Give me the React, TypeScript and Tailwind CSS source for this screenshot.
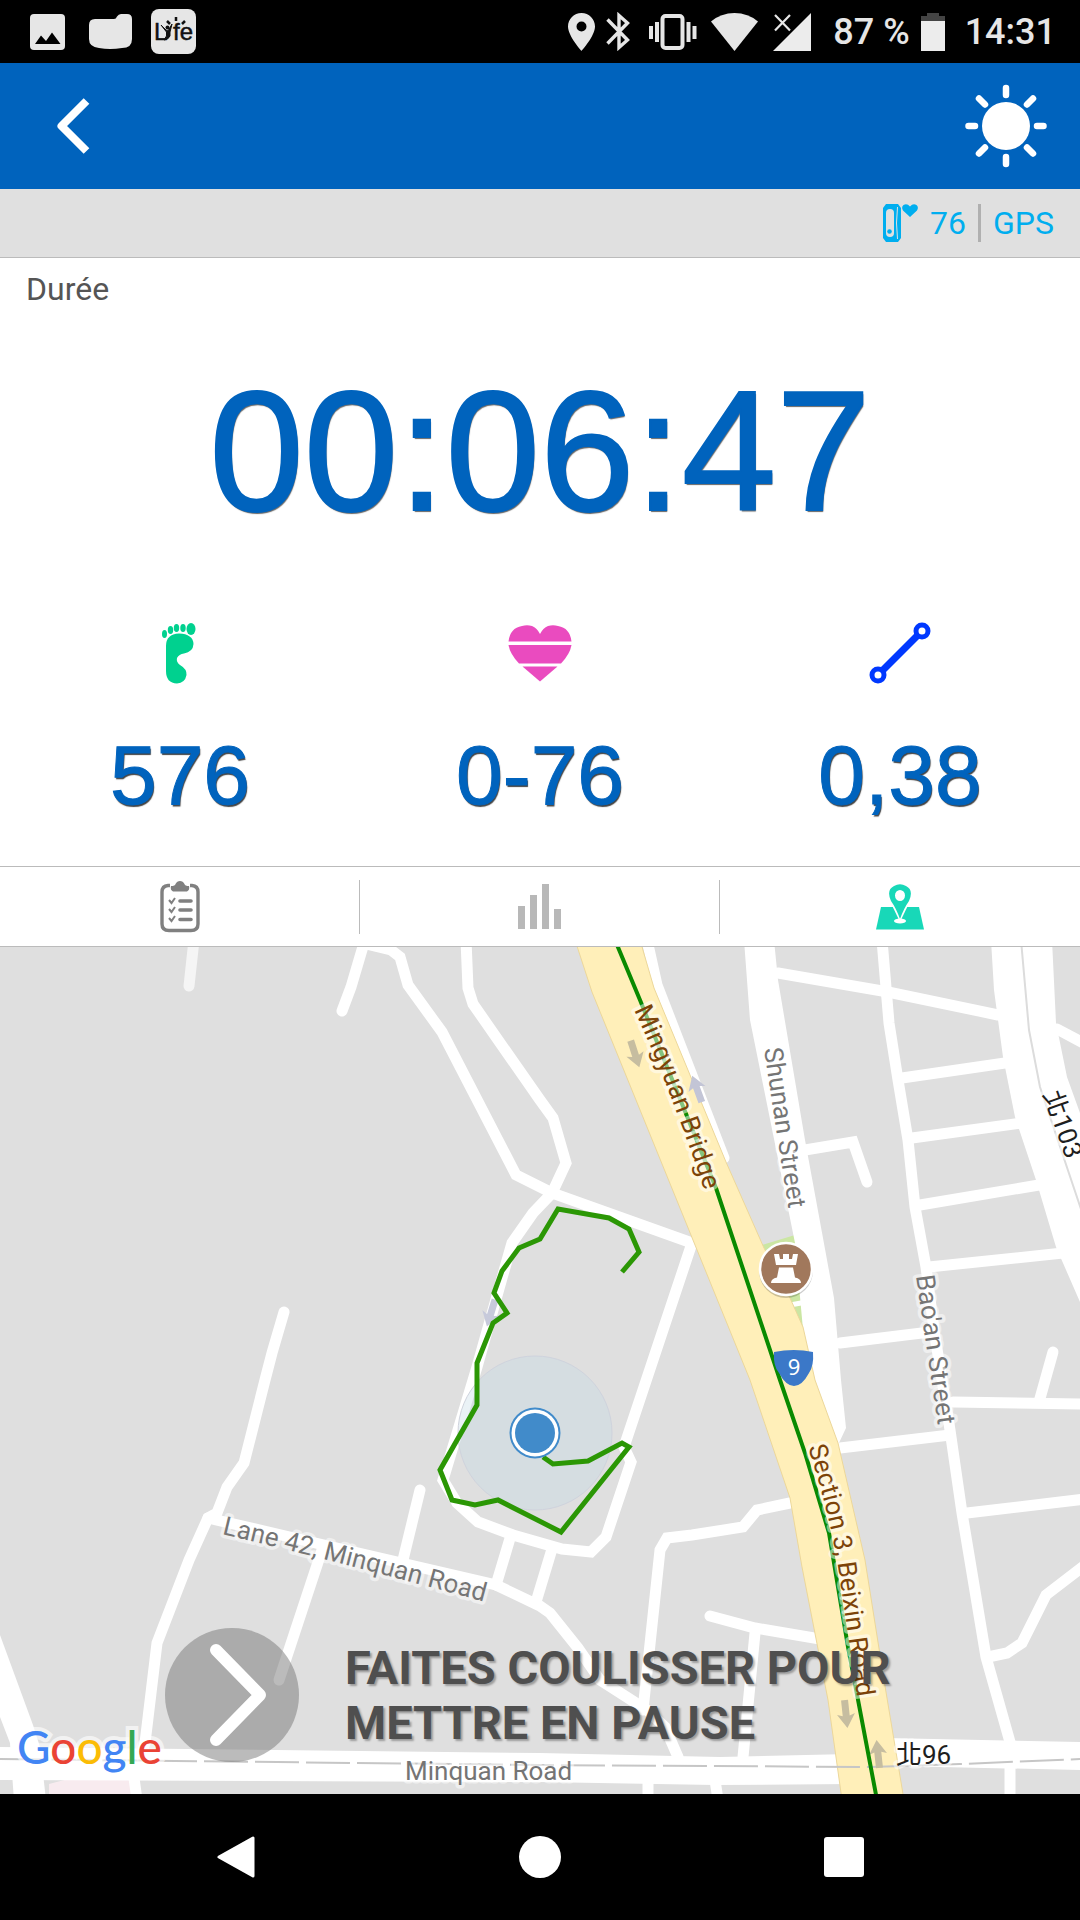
import type { ReactNode } from "react";

const roads = [
  "M364 943L351 987L342 1011",
  "M362 943L391 950L400 957L408 985L442 1032L516 1175L552 1193L692 1243",
  "M466 940L468 988L473 1004L540 1100L553 1118L566 1163L552 1193L533 1213L512 1243L502 1278L477 1367L443 1480L457 1503L478 1522L513 1535L562 1549L591 1552L606 1537L631 1462L624 1447L692 1243",
  "M511 1535L496 1585",
  "M552 1549L536 1602",
  "M284 1312L272 1353L265 1380L244 1463L227 1487L217 1513L208 1518L189 1560L157 1643L145 1743L134 1778L137 1800",
  "M208 1518L324 1545L496 1585L540 1606L550 1613L578 1648L600 1680L647 1710L665 1727L678 1757",
  "M420 1490L403 1560",
  "M322 1550L279 1680",
  "M790 1503L757 1510L743 1527L692 1535L667 1538L660 1550L643 1710",
  "M710 1616L755 1628L820 1639",
  "M755 1633L743 1757",
  "M648 1780V1800",
  "M715 1780L718 1800",
  "M778 973L888 992L998 1015",
  "M1057 1029L1085 1044",
  "M882 940L889 1023L898 1080L908 1140L915 1207L926 1267L934 1330L950 1430L962 1513L986 1657L1010 1742V1800",
  "M902 1078L1005 1063",
  "M912 1138L1022 1123",
  "M920 1205L1039 1185",
  "M929 1267L1063 1253",
  "M840 1343L930 1332",
  "M840 1448L950 1435",
  "M953 1402L1085 1404",
  "M1039 1402L1053 1352",
  "M967 1513L1085 1499",
  "M1085 1565L1046 1595L1022 1643L1007 1653L988 1657",
  "M805 1150L853 1142L867 1182",
];

const arrows = [
  { at: "translate(635 1054) rotate(-18)", color: "#c6bda0" },
  { at: "translate(697 1089) rotate(160)", color: "#c3c5d6" },
  { at: "translate(491 1313) rotate(17)", color: "#c7cadb" },
  { at: "translate(846 1714) rotate(-6)", color: "#c6bda0" },
  { at: "translate(878 1754) rotate(174)", color: "#c6bda0" },
];

const StatusBar = () => (
  <div className="flex h-[63px] items-center justify-between bg-black pl-[30px] pr-6 text-[#e6e6e6]">
    <div className="flex items-center">
      <svg width="35" height="36" viewBox="0 0 35 36" aria-hidden="true">
        <rect width="35" height="36" rx="4" fill="#e6e6e6" />
        <path d="M5 30L11 21.500L16 27L22 18.500L30.500 30z" fill="#000" />
      </svg>
      <svg className="ml-6" width="43" height="35" viewBox="0 0 43 35" aria-hidden="true">
        <path
          d="M6 5H25Q27 5 28 2.500Q29.500 0 32 0H38Q43 0 43 5V25Q43 34 33 34Q21 36 10 34Q0 33 0 25V11Q0 5 6 5z"
          fill="#e6e6e6"
        />
      </svg>
      <svg className="ml-[19px]" width="45" height="45" viewBox="0 0 45 45" role="img" aria-label="Lyfe">
        <rect width="45" height="45" rx="8" fill="#e6e6e6" />
        <g fontSize="24" fill="#111" stroke="#111" strokeWidth=".5" fontFamily="Liberation Sans, sans-serif">
          <text x="3" y="31">L</text>
          <text x="22" y="31">fe</text>
        </g>
        <path d="M10 16L15 21L17 22L21 15L19 23V27Q17 31 13 31L15.500 27V23z" fill="#111" stroke="#111" />
        <circle cx="16.500" cy="18.500" r="2" fill="#111" />
        <path d="M16 12L19 15M25 8V12M34 12L31 15" stroke="#111" strokeWidth="2.500" />
      </svg>
    </div>

    <div className="flex items-center">
      <svg width="27" height="38" viewBox="0 0 27 38" aria-hidden="true">
        <path
          d="M13.500 0C6 0 0 6 0 13.500C0 23 13.500 38 13.500 38S27 23 27 13.500C27 6 21 0 13.500 0zM13.500 18.500a5 5 0 1 1 0-10a5 5 0 0 1 0 10z"
          fill="#e6e6e6"
        />
      </svg>
      <svg className="ml-[11px]" width="25" height="39" viewBox="0 0 25 39" fill="none" stroke="#e6e6e6" strokeWidth="3.400" aria-hidden="true">
        <path d="M1.500 7.500L21.500 28L13 35.500V3.500L21.500 11L1.500 31.500" />
      </svg>
      <svg className="ml-[18px]" width="48" height="36" viewBox="0 0 48 36" fill="#e6e6e6" aria-hidden="true">
        <rect x="13.500" y="2" width="20" height="32" rx="3" fill="none" stroke="#e6e6e6" strokeWidth="4" />
        <path d="M0 12h4v13H0zM6 8h4v20H6zM37.500 8h4v20h-4zM43.500 12h4v13h-4z" />
      </svg>
      <svg className="ml-[14px]" width="47" height="38" viewBox="0 0 47 38" aria-hidden="true">
        <path d="M0 8.500Q10 0 23.500 0T47 8.500L23.500 38z" fill="#e6e6e6" />
      </svg>
      <svg className="ml-[15px]" width="38" height="38" viewBox="0 0 38 38" aria-hidden="true">
        <path d="M0 38L38 0V38z" fill="#ececec" />
        <path d="M2 2L17 17.500M17 2L2 17.500" stroke="#e6e6e6" strokeWidth="2.200" />
      </svg>
      <span className="ml-[22px] text-[36px] font-medium leading-[42px]">87 %</span>
      <svg className="ml-[11px]" width="24" height="38" viewBox="0 0 24 38" aria-hidden="true">
        <path d="M6 0h12v3h6v5H0V3h6z" fill="#444" />
        <path d="M0 8h24v30H0z" fill="#ececec" />
      </svg>
      <span className="ml-5 text-[36px] font-medium leading-[42px]">14:31</span>
    </div>
  </div>
);

const Header = () => (
  <header className="flex h-[126px] items-center justify-between bg-[#0063bd] pl-[53px] pr-[33px]">
    <button type="button" aria-label="Retour" className="cursor-pointer">
      <svg width="40" height="60" viewBox="0 0 40 60" fill="none">
        <path d="M33.500 5L8.500 30L33.500 55" stroke="#fff" strokeWidth="8" strokeLinejoin="round" />
      </svg>
    </button>
    <button type="button" aria-label="Luminosité" className="cursor-pointer">
      <svg width="82" height="84" viewBox="-41 -42 82 84" fill="#fff" stroke="#fff">
        <circle r="24" stroke="none" />
        <path
          d="M0-38V-31M0 38V31M-37.500 0H-31M37.500 0H31M-27-27.500L-21-21.500M27-27.500L21-21.500M-27 27.500L-21 21.500M27 27.500L21 21.500"
          strokeWidth="6.500"
          strokeLinecap="round"
        />
      </svg>
    </button>
  </header>
);

const SensorBar = () => (
  <div className="flex h-[69px] items-center justify-end border-b border-[#bbbbbb] bg-[#e0e0e0] pr-[26px] text-[32px] leading-[40px] text-[#00aeef]">
    <svg width="35" height="38" viewBox="0 0 35 38" aria-hidden="true">
      <path d="M3 0H15L18 4V34L15 38H3L0 34V4z" fill="#00aeef" />
      <rect x="3" y="5" width="8" height="28" rx="4" fill="#e0e0e0" />
      <circle cx="6.500" cy="27.500" r="2.300" fill="#00aeef" />
      <path d="M14.500 3Q12.500 19 14.500 35" stroke="#e0e0e0" fill="none" />
      <path d="M27 13L20 6.500Q18 3 20.500 1Q24-1 27 2.500Q30-1 33.500 1Q36 3 34 6.500z" fill="#00aeef" />
    </svg>
    <span className="ml-3">76</span>
    <span className="mx-3 h-[38px] w-[3px] bg-[#b0b0b0]" />
    <span>GPS</span>
  </div>
);

const FootIcon = () => (
  <svg width="64" height="62" viewBox="0 0 64 62" fill="#00d18f">
    <ellipse cx="16.500" cy="12" rx="2.500" ry="4" />
    <ellipse cx="22.500" cy="8" rx="2.700" ry="4" />
    <ellipse cx="28.500" cy="6" rx="2.700" ry="4" />
    <ellipse cx="35" cy="6" rx="2.700" ry="4" />
    <ellipse cx="43" cy="7" rx="4.500" ry="6" />
    <path d="M18 24Q18 12 31 11.500Q45 12 45.500 22Q45 30 36 31.500Q31 32 29 36Q28 40 32 43Q39 47 38.500 53Q37 61 29 61.500Q18 61 18 49z" />
  </svg>
);

const HeartIcon = () => (
  <svg width="64" height="62" viewBox="0 0 64 62" fill="#ea4bbf">
    <path d="M.500 19.500Q2 6 14 4Q19 2.500 24 4Q29 6 32 12Q35 6 40 4Q45 2.500 50 4Q62 6 63.500 19.500z" />
    <path d="M.500 23H63.500Q62 32 53 41.500H11Q2 32 .500 23z" />
    <path d="M14.500 44.500H49.500L32 59.500z" />
  </svg>
);

const DistanceIcon = () => (
  <svg width="64" height="62" viewBox="0 0 64 62" fill="none" stroke="#0038ff">
    <path d="M15 48L49 14" strokeWidth="7" />
    <circle cx="54" cy="9" r="6" strokeWidth="5" />
    <circle cx="10" cy="53" r="6" strokeWidth="5" />
  </svg>
);

const Stat = ({ icon, value }: { icon: ReactNode; value: string }) => (
  <div className="flex flex-col items-center gap-[49px]">
    {icon}
    <span className="font-['Liberation_Sans',sans-serif] text-[84px] leading-[84px] text-[#0063bd] [-webkit-text-stroke:1px_#0063bd] [text-shadow:1px_2px_1px_#444]">
      {value}
    </span>
  </div>
);

const Tabs = () => (
  <nav className="grid h-[81px] grid-cols-3 items-center border-y border-[#bbbbbb] bg-white">
    <button type="button" aria-label="Liste" className="flex h-[54px] cursor-pointer items-center justify-center border-r border-[#bbbbbb]">
      <svg width="40" height="52" viewBox="0 0 40 52" fill="none" stroke="#808080">
        <path d="M10 4.500H8Q2 5 2 11V43Q2 49.500 9 49.500H31Q38 49.500 38 43V11Q38 5 32 4.500H30" strokeWidth="3.400" />
        <path d="M11 5Q15 5 15.500 3Q17 0 20 0Q23 0 24.500 3Q25 5 29 5Q30 9 27 10.500H13Q10 9 11 5z" fill="#808080" stroke="none" />
        <path d="M9 19L11.500 22L15 17M9 28L11.500 31L15 26M9 37L11.500 40L15 35" strokeWidth="2" />
        <path d="M20 20H31M20 29H31M20 38.500H31" strokeWidth="3.600" strokeLinecap="round" />
      </svg>
    </button>
    <button type="button" aria-label="Graphique" className="flex h-[54px] cursor-pointer items-center justify-center border-r border-[#bbbbbb]">
      <svg width="44" height="46" viewBox="0 0 44 46" fill="#b8b8b8">
        <path d="M0 22h7v23H0zM12 11h7v34h-7zM24 0h7v45h-7zM36 25h7v20h-7z" />
      </svg>
    </button>
    <button type="button" aria-label="Carte" aria-current="page" className="flex h-[54px] cursor-pointer items-center justify-center">
      <svg width="48" height="46" viewBox="0 0 48 46">
        <path d="M5 23H43L48 45.500H0z" fill="#18d8b8" />
        <path d="M24 38L12 13Q13-1 24-1T36 13z" fill="#fff" />
        <path
          d="M24 35Q20 24 15 17Q10 6 18 2Q24-1.500 30 2Q38 6 33 17Q28 24 24 35zM24 6a5 5.500 0 1 0 0 11a5 5.500 0 0 0 0-11z"
          fill="#18d8b8"
          fillRule="evenodd"
        />
        <ellipse cx="24" cy="37" rx="6" ry="2.500" fill="#fff" />
      </svg>
    </button>
  </nav>
);

const StreetMap = () => (
  <svg
    className="absolute inset-0 h-full w-full"
    viewBox="0 947 1080 847"
    preserveAspectRatio="xMidYMid slice"
    role="img"
    aria-label="Carte du parcours"
    fontFamily="Roboto, sans-serif"
  >
    <rect y="947" width="1080" height="847" fill="#dfdfdf" />
    <path d="M194 940L189 986" stroke="#f5f5f5" strokeWidth="11" strokeLinecap="round" />

    {/* parks and blocks */}
    <path d="M762 1245L795 1235L815 1400H800z" fill="#cbe6a3" />
    <path d="M49 1784L68 1779H130L132 1800H49z" fill="#f8ebef" />

    {/* minor streets */}
    <g fill="none" stroke="#fff" strokeWidth="11" strokeLinecap="round" strokeLinejoin="miter">
      {roads.map((d) => (
        <path key={d} d={d} />
      ))}
      <path d="M647 940L657 985L724 1158" />
      <path d="M790 1305L812 1301" strokeWidth="5" />
    </g>

    {/* wide streets */}
    <g fill="#fff">
      <path d="M0 1635L33 1725L40 1747L46 1800H14L11 1760L10 1743L0 1717z" />
      <path d="M0 1747L540 1753L720 1757L850 1754V1784L715 1785L540 1782L0 1780z" />
      <path d="M885 1738L1080 1742V1770L895 1766z" />
      <path d="M744 940L750 1020L795 1243L804 1340L809 1390L838 1445L846 1428L841 1380L834 1298L805 1140L778 980L774 940z" />
      <path d="M991 940L994 990L1003 1057L1015 1117L1036 1180L1056 1247L1080 1302V1113L1067 1077L1056 1023L1052 940z" />
    </g>
    <path d="M1021 940L1029 1030L1040 1087L1083 1215" stroke="#dcdcdc" strokeWidth="2" fill="none" />

    {/* main avenue */}
    <path
      d="M575 940L592 992L750 1380L790 1498L802 1567L828 1700L842 1800H904L884 1680L865 1560L838 1443L815 1380L803 1327L790 1298L764 1248L726 1162L654 988L640 940z"
      fill="#ffefb9"
      stroke="#ecd79a"
    />
    <path d="M0 1759L540 1765L870 1767L960 1764L1080 1759" fill="none" stroke="#c6c6c6" strokeWidth="2" strokeDasharray="44 7" />

    {arrows.map(({ at, color }) => (
      <path key={at} transform={at} d="M-3.500-14H3.500V2L9 0L0 14L-9 0L-3.500 2z" fill={color} />
    ))}

    <path
      d="M615 940L640 1000L716 1188L780 1380L805 1453L829 1533L848 1647L877 1800"
      fill="none"
      stroke="#0a8a00"
      strokeWidth="4"
    />

    {/* street names */}
    <defs>
      <path id="mingyuan" d="M634 1010Q668 1082 706 1195" />
      <path id="shunan" d="M764 1049Q776 1130 792 1230" />
      <path id="baoan" d="M916 1276L940 1440" />
      <path id="section3" d="M808 1447Q830 1515 838 1567L862 1730" />
      <path id="lane42" d="M222 1534Q340 1562 500 1606" />
      <path id="route103" d="M1043 1094L1075 1185" />
    </defs>
    <g fontSize="26" stroke="#fff" strokeOpacity=".5" strokeWidth="7" strokeLinejoin="round" paintOrder="stroke">
      <text fill="#7c4308"><textPath href="#mingyuan">Mingyuan Bridge</textPath></text>
      <text fill="#7c4308"><textPath href="#section3">Section 3, Beixin Road</textPath></text>
      <text fill="#757575"><textPath href="#shunan">Shunan Street</textPath></text>
      <text fill="#757575"><textPath href="#baoan">Bao'an Street</textPath></text>
      <text fill="#757575"><textPath href="#lane42">Lane 42, Minquan Road</textPath></text>
      <text x="405" y="1780" fill="#757575">Minquan Road</text>
      <g fill="#1e1e1e" fontFamily="Roboto, 'Noto Sans CJK TC', sans-serif">
        <text><textPath href="#route103">北103</textPath></text>
        <text x="896" y="1764">北96</text>
      </g>
    </g>

    {/* points of interest */}
    <circle cx="786" cy="1271" r="27" fill="#000" opacity=".2" />
    <circle cx="786" cy="1269" r="26" fill="#a1785c" stroke="#fff" strokeWidth="2.500" />
    <path
      d="M774 1254h5l1 5h3v-5h6v5h3l1-5h5l-2 11h-20zM779 1267.500h14l2 10q6 1 6 5.500h-30q0-4.500 6-5.500z"
      fill="#fff"
    />
    <path d="M774 1352Q794 1348 813 1352Q814 1366 809 1373Q802 1386 794 1386T779 1373Q773 1366 774 1352z" fill="#3b78c8" />
    <text x="794" y="1375" textAnchor="middle" fontSize="22" fill="#fff" fontFamily="Noto Sans, sans-serif">
      9
    </text>

    {/* position and recorded track */}
    <circle cx="535" cy="1433" r="77" fill="#c4dbe6" fillOpacity=".35" stroke="#cfd3dd" />
    <path
      d="M622 1272L639 1252L629 1229L609 1218L558 1209L540 1239L519 1248L502 1271L494 1293L507 1313L493 1323L477 1363V1405L440 1470L452 1500L475 1505L498 1500L561 1532L629 1447L622 1443L588 1461L553 1464L543 1457"
      fill="none"
      stroke="#2b9705"
      strokeWidth="5"
    />
    <circle cx="535" cy="1433" r="25.500" fill="#418bca" />
    <circle cx="535" cy="1433" r="23.500" fill="#fff" />
    <circle cx="535" cy="1433" r="20" fill="#418bca" />

    <text
      x="17"
      y="1764"
      fontSize="46"
      fontWeight="500"
      fontFamily="Lato, sans-serif"
      stroke="#fff"
      strokeOpacity=".6"
      strokeWidth="8"
      paintOrder="stroke"
    >
      <tspan fill="#4285f4">G</tspan>
      <tspan fill="#ea4335">o</tspan>
      <tspan fill="#fbbc05">o</tspan>
      <tspan fill="#4285f4">g</tspan>
      <tspan fill="#34a853">l</tspan>
      <tspan fill="#ea4335">e</tspan>
    </text>
  </svg>
);

const NavBar = () => (
  <div className="grid h-[126px] grid-cols-3 items-center bg-black px-21">
    <button type="button" aria-label="Précédent" className="flex cursor-pointer justify-center">
      <svg width="38" height="42" viewBox="0 0 38 42">
        <path d="M2 21L36 2V40z" fill="#fff" stroke="#fff" strokeWidth="3" strokeLinejoin="round" />
      </svg>
    </button>
    <button type="button" aria-label="Accueil" className="flex cursor-pointer justify-center">
      <span className="size-[42px] rounded-full bg-white" />
    </button>
    <button type="button" aria-label="Applications récentes" className="flex cursor-pointer justify-center">
      <span className="size-10 rounded-[3px] bg-white" />
    </button>
  </div>
);

const App = () => {
  return (
    <div className="flex min-h-screen flex-col bg-white font-['Roboto',sans-serif]">
      <StatusBar />
      <Header />
      <SensorBar />

      <section className="pb-[49px] pt-[11px]">
        <h1 className="px-[26px] text-[32px] leading-[40px] text-[#555555]">Durée</h1>
        <p className="mt-14 text-center font-['Liberation_Sans',sans-serif] text-[170px] leading-[172px] text-[#0063bd] [-webkit-text-stroke:2px_#0063bd] [text-shadow:1px_2px_1px_#666]">
          00:06:47
        </p>
        <div className="mt-[85px] grid grid-cols-3">
          <Stat icon={<FootIcon />} value="576" />
          <Stat icon={<HeartIcon />} value="0-76" />
          <Stat icon={<DistanceIcon />} value="0,38" />
        </div>
      </section>

      <Tabs />

      <main className="relative min-h-[640px] flex-1 overflow-hidden">
        <StreetMap />
        <button
          type="button"
          className="absolute bottom-8 left-[165px] flex cursor-pointer items-center gap-[46px] text-left"
        >
          <svg width="134" height="134" viewBox="0 0 134 134" aria-hidden="true">
            <circle cx="67" cy="67" r="67" fill="#777777" fillOpacity=".5" />
            <path d="M51 22L95 67L51 112" fill="none" stroke="#fff" strokeWidth="12" strokeLinecap="round" strokeLinejoin="round" />
          </svg>
          <span className="text-[47px] font-bold uppercase leading-[55px] text-[#4f4f4f] [text-shadow:2px_2px_2px_rgba(0,0,0,0.3)]">
            Faites coulisser pour
            <br />
            mettre en pause
          </span>
        </button>
      </main>

      <NavBar />
    </div>
  );
};

export default App;
